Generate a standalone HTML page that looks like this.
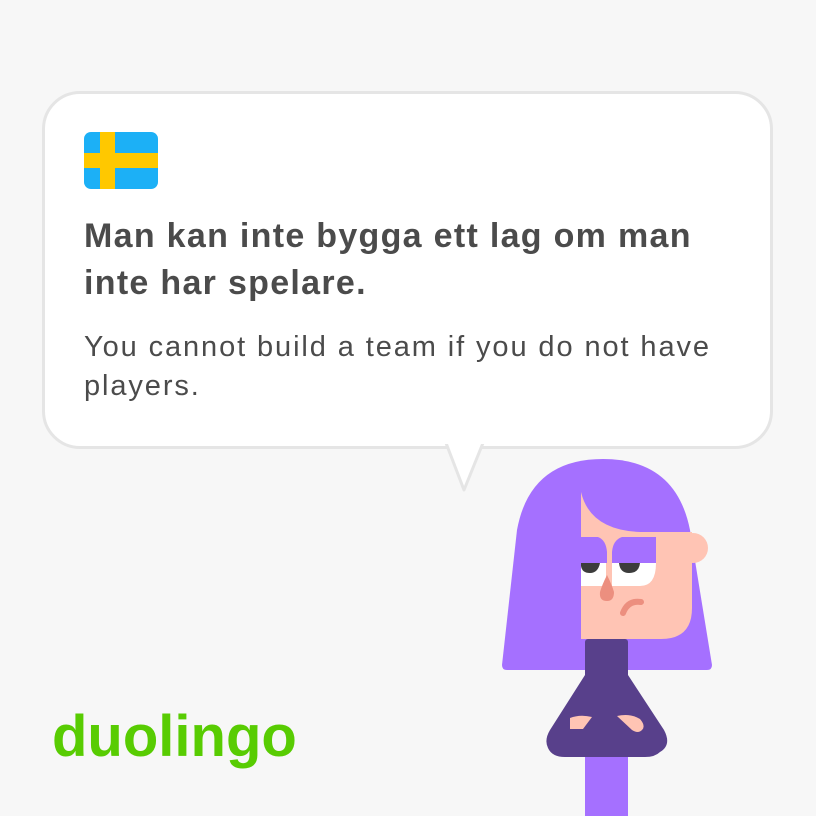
<!DOCTYPE html>
<html><head><meta charset="utf-8"><style>
html,body{margin:0;padding:0;}
body{width:816px;height:816px;background:#f7f7f7;position:relative;overflow:hidden;font-family:"Liberation Sans",sans-serif;}
.bubble{position:absolute;left:42px;top:91px;width:725px;height:352px;background:#fff;border:3px solid #e5e5e5;border-radius:38px;box-sizing:content-box;}
.flag{position:absolute;left:84px;top:132px;width:74px;height:57px;border-radius:7px;background:#1cb0f6;overflow:hidden;}
.flag .v{position:absolute;left:16px;top:0;width:15px;height:57px;background:#ffc800;}
.flag .h{position:absolute;left:0;top:21px;width:74px;height:15px;background:#ffc800;}
.h1{position:absolute;left:84px;top:213px;width:650px;font-weight:bold;font-size:34px;line-height:47px;color:#4b4b4b;letter-spacing:1.3px;}
.p{position:absolute;left:84px;top:328px;width:660px;font-size:29px;line-height:39px;color:#4b4b4b;letter-spacing:1.9px;}
.logo{position:absolute;left:52px;top:703px;font-weight:bold;font-size:58px;color:#58cc02;letter-spacing:0px;font-family:"Liberation Sans",sans-serif;}
</style></head><body>
<div class="bubble"></div>
<svg style="position:absolute;left:0;top:0" width="816" height="816">
<path d="M446 443 L464 490 L483 443" fill="#fff" stroke="#e5e5e5" stroke-width="3" stroke-linejoin="round"/>
<rect x="444" y="438" width="42" height="6" fill="#fff"/>
<path d="M502 665 L517 530 Q530 459 603 459 Q676 459 690 530 L712 665 Q712 670 707 670 L507 670 Q502 670 502 665Z" fill="#a570ff"/>
<rect x="585" y="750" width="43" height="66" fill="#a570ff"/>
<rect x="585" y="639" width="43" height="45" rx="3" fill="#58408b"/>
<path d="M585 675 L628 675 L664 730 Q672 745 660 752 Q655 757 645 757 L565 757 Q552 757 548 748 Q544 740 550 730Z" fill="#58408b"/>
<path d="M570 718 Q580 714 592 717 L583 729 L570 729Z" fill="#ffc4b4"/>
<path d="M617 716 Q630 713 640 719 Q646 726 642 730 Q638 734 632 730Z" fill="#ffc4b4"/>
<path d="M581 492 Q590 530 640 532 L692 532 L692 608 Q692 639 661 639 L581 639Z" fill="#ffc4b4"/>
<circle cx="693" cy="548" r="15" fill="#ffc4b4"/>
<rect x="678" y="532" width="14" height="30" fill="#ffc4b4"/>
<path d="M581 563 L606 563 L606 586 L581 586Z" fill="#fff"/>
<path d="M612 563 L656 563 Q656 586 640 586 L612 586Z" fill="#fff"/>
<path d="M581 563 L600 563 Q598 573 590 573 Q582 573 581 566Z" fill="#3c3c3c"/>
<path d="M619 563 L640 563 Q639 573 629 573 Q620 573 619 563Z" fill="#3c3c3c"/>
<path d="M581 537 L598 537 Q606 540 607 552 L607 563 L581 563Z" fill="#a570ff"/>
<path d="M612 552 Q613 540 622 537 L656 537 L656 563 L612 563Z" fill="#a570ff"/>
<path d="M607 575 Q612 585 614 592 Q614 601 607 601 Q599 601 600 592 Q602 585 607 575Z" fill="#ec8f7f"/>
<path d="M623 613 Q628 600 641 602" fill="none" stroke="#ec8f7f" stroke-width="6" stroke-linecap="round"/>
</svg>
<div class="flag"><div class="v"></div><div class="h"></div></div>
<div class="h1">Man kan inte bygga ett lag om man inte har spelare.</div>
<div class="p">You cannot build a team if you do not have players.</div>
<div class="logo">duolingo</div>
</body></html>
